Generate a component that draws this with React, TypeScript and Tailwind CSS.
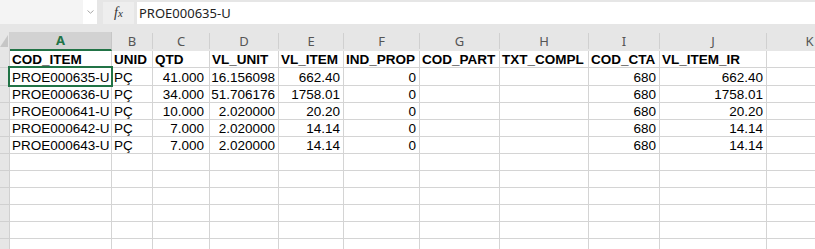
import React from 'react';

const cols = ['A', 'B', 'C', 'D', 'E', 'F', 'G', 'H', 'I', 'J', 'K'];

// widths include the 1px right grid line
const widths = [
  'w-[102px]',
  'w-[41px]',
  'w-[57px]',
  'w-[69px]',
  'w-[65px]',
  'w-[76px]',
  'w-[80px]',
  'w-[89px]',
  'w-[71px]',
  'w-[107px]',
  'w-[86px]',
];

// right aligned = numbers
const numeric = [false, false, true, true, true, true, false, false, true, true, false];

const header = ['COD_ITEM', 'UNID', 'QTD', 'VL_UNIT', 'VL_ITEM', 'IND_PROP', 'COD_PART', 'TXT_COMPL', 'COD_CTA', 'VL_ITEM_IR', ''];

const data: string[][] = [
  ['PROE000635-U', 'PÇ', '41.000', '16.156098', '662.40', '0', '', '', '680', '662.40', ''],
  ['PROE000636-U', 'PÇ', '34.000', '51.706176', '1758.01', '0', '', '', '680', '1758.01', ''],
  ['PROE000641-U', 'PÇ', '10.000', '2.020000', '20.20', '0', '', '', '680', '20.20', ''],
  ['PROE000642-U', 'PÇ', '7.000', '2.020000', '14.14', '0', '', '', '680', '14.14', ''],
  ['PROE000643-U', 'PÇ', '7.000', '2.020000', '14.14', '0', '', '', '680', '14.14', ''],
];

const rowHeights = [
  'h-[17px]',
  'h-[18px]',
  'h-[17px]',
  'h-[17px]',
  'h-[17px]',
  'h-[17px]',
  'h-[17px]',
  'h-[17px]',
  'h-[17px]',
  'h-[17px]',
  'h-[17px]',
  'h-[17px]',
];

const FormulaBar = () => (
  <div className="h-[32px] bg-[#e6e6e6] flex items-start">
    {/* name box */}
    <div className="h-[24px] w-[97px] flex bg-[#f4f4f4]">
      <div className="flex-1" />
      <div className="w-[14px] h-full bg-white flex items-center justify-center">
        <svg width="7" height="4" viewBox="0 0 7 4" fill="none">
          <path d="M0.5 0.5 L3.5 3.2 L6.5 0.5" stroke="#a6a6a6" strokeWidth="1" />
        </svg>
      </div>
    </div>
    {/* fx button */}
    <div className="ml-[6px] mt-[2px] h-[22px] w-[31px] bg-[#eeeeee] flex items-center justify-center">
      <span className="italic text-[14px] text-[#333] leading-none font-['Liberation_Serif',serif]">
        f<span className="text-[11px]">x</span>
      </span>
    </div>
    {/* formula input */}
    <div className="ml-[3px] mt-[2px] h-[22px] flex-1 bg-white flex items-center pl-[2px]">
      <span className="text-[13px] text-[#222] font-['Noto_Sans',sans-serif] leading-none">PROE000635-U</span>
    </div>
  </div>
);

const ColumnHeaders = () => (
  <div className="flex h-[19px] bg-[#e6e6e6]">
    <div className="w-[10px] shrink-0 relative border-r border-[#d0d0d0]">
      <svg className="absolute left-0 top-[3px]" width="9" height="13" viewBox="0 0 9 13">
        <polygon points="8,0 8,12 0,12" fill="#c6c6c6" />
      </svg>
    </div>
    {cols.map((c, i) =>
      i === 0 ? (
        <div
          key={c}
          className={`${widths[i]} shrink-0 bg-[#d2d2d2] border-r border-[#c6c6c6] border-b-2 border-b-[#217346] flex items-center justify-center text-[13px] font-bold text-[#217346] font-['Noto_Sans',sans-serif] leading-none`}
        >
          {c}
        </div>
      ) : (
        <div
          key={c}
          className={`${widths[i]} shrink-0 border-r border-[#d0d0d0] mt-[1px] mb-[2px] flex items-center justify-center text-[13px] text-[#555] font-['Noto_Sans',sans-serif] leading-none`}
        >
          {c}
        </div>
      )
    )}
  </div>
);

export default function App() {
  const rows: string[][] = [header, ...data];
  while (rows.length < rowHeights.length) rows.push(new Array(11).fill(''));

  return (
    <div className="w-[815px] h-[249px] overflow-hidden bg-white relative font-['Liberation_Sans',Arial,sans-serif]">
      <FormulaBar />
      <ColumnHeaders />
      <div>
        {rows.map((r, ri) => (
          <div key={ri} className={`flex ${rowHeights[ri]}`}>
            <div className="w-[10px] shrink-0 bg-[#e6e6e6] border-r border-b border-[#d0d0d0]" />
            {r.map((v, ci) => (
              <div
                key={ci}
                className={`${widths[ci]} shrink-0 border-r border-b border-[#d4d4d4] flex items-end overflow-visible whitespace-nowrap text-[13.5px] leading-[14px] text-black ${
                  ri === 0 ? 'font-bold pl-[2px]' : numeric[ci] ? (ci === 2 ? 'justify-end pr-[5px]' : 'justify-end pr-[3px]') : 'pl-[2px]'
                }`}
              >
                {v}
              </div>
            ))}
          </div>
        ))}
      </div>
      {/* active cell A2 */}
      <div className="absolute left-[8px] top-[66px] w-[105px] h-[21px] border-2 border-[#217346]" />
    </div>
  );
}
